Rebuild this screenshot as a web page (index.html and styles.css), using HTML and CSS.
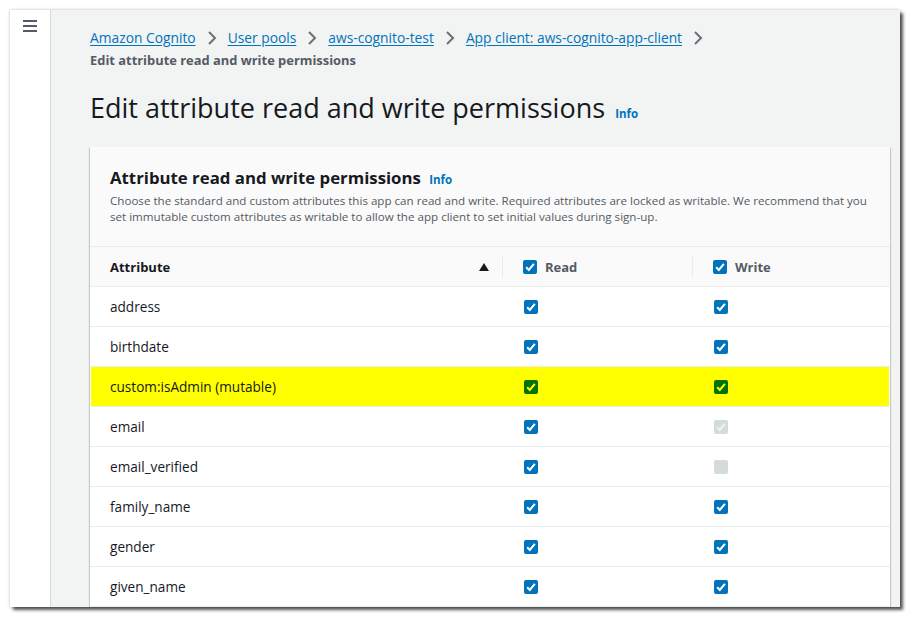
FILE: index.html
```html
<!DOCTYPE html>
<html lang="en">
<head>
<meta charset="utf-8">
<title>Edit attribute read and write permissions</title>
<link rel="stylesheet" href="styles.css">
</head>
<body>
<div class="frame">
  <aside class="nav">
    <span class="burger"><i></i><i></i><i></i></span>
  </aside>
  <main class="main">
    <nav class="crumbs">
      <div class="trail">
        <a href="#">Amazon Cognito</a>
        <svg class="chev" viewBox="0 0 12 16"><path d="M3 2l6 6-6 6"/></svg>
        <a href="#">User pools</a>
        <svg class="chev" viewBox="0 0 12 16"><path d="M3 2l6 6-6 6"/></svg>
        <a href="#">aws-cognito-test</a>
        <svg class="chev" viewBox="0 0 12 16"><path d="M3 2l6 6-6 6"/></svg>
        <a href="#">App client: aws-cognito-app-client</a>
        <svg class="chev" viewBox="0 0 12 16"><path d="M3 2l6 6-6 6"/></svg>
      </div>
      <div class="current">Edit attribute read and write permissions</div>
    </nav>
    <h1 class="title">Edit attribute read and write permissions <a class="info info-lg" href="#">Info</a></h1>
    <section class="card">
      <header class="card-head">
        <h2 class="card-title">Attribute read and write permissions <a class="info" href="#">Info</a></h2>
        <p class="card-desc">Choose the standard and custom attributes this app can read and write. Required attributes are locked as writable. We recommend that you set immutable custom attributes as writable to allow the app client to set initial values during sign-up.</p>
      </header>
      <div class="table">
        <div class="row row-head">
          <div class="cell cell-attr">
            <span class="th-label">Attribute</span>
            <svg class="sort" viewBox="0 0 10 8"><path d="M5 0L10 8H0z"/></svg>
            <span class="sep"></span>
          </div>
          <div class="cell cell-chk">
            <svg class="cb" viewBox="0 0 14 14"><rect width="14" height="14" rx="2"/><path d="M3.2 7.3l2.6 2.6L10.9 3.8"/></svg>
            <span class="th-col">Read</span>
            <span class="sep"></span>
          </div>
          <div class="cell cell-chk">
            <svg class="cb" viewBox="0 0 14 14"><rect width="14" height="14" rx="2"/><path d="M3.2 7.3l2.6 2.6L10.9 3.8"/></svg>
            <span class="th-col">Write</span>
          </div>
        </div>

        <div class="row">
          <div class="cell cell-attr">address</div>
          <div class="cell cell-chk"><svg class="cb" viewBox="0 0 14 14"><rect width="14" height="14" rx="2"/><path d="M3.2 7.3l2.6 2.6L10.9 3.8"/></svg></div>
          <div class="cell cell-chk"><svg class="cb" viewBox="0 0 14 14"><rect width="14" height="14" rx="2"/><path d="M3.2 7.3l2.6 2.6L10.9 3.8"/></svg></div>
        </div>
        <div class="row">
          <div class="cell cell-attr">birthdate</div>
          <div class="cell cell-chk"><svg class="cb" viewBox="0 0 14 14"><rect width="14" height="14" rx="2"/><path d="M3.2 7.3l2.6 2.6L10.9 3.8"/></svg></div>
          <div class="cell cell-chk"><svg class="cb" viewBox="0 0 14 14"><rect width="14" height="14" rx="2"/><path d="M3.2 7.3l2.6 2.6L10.9 3.8"/></svg></div>
        </div>
        <div class="row row-hl">
          <div class="cell cell-attr">custom:isAdmin (mutable)</div>
          <div class="cell cell-chk"><svg class="cb cb-hl" viewBox="0 0 14 14"><rect width="14" height="14" rx="2"/><path d="M3.2 7.3l2.6 2.6L10.9 3.8"/></svg></div>
          <div class="cell cell-chk"><svg class="cb cb-hl" viewBox="0 0 14 14"><rect width="14" height="14" rx="2"/><path d="M3.2 7.3l2.6 2.6L10.9 3.8"/></svg></div>
        </div>
        <div class="row">
          <div class="cell cell-attr">email</div>
          <div class="cell cell-chk"><svg class="cb" viewBox="0 0 14 14"><rect width="14" height="14" rx="2"/><path d="M3.2 7.3l2.6 2.6L10.9 3.8"/></svg></div>
          <div class="cell cell-chk"><svg class="cb cb-off" viewBox="0 0 14 14"><rect width="14" height="14" rx="2"/><path d="M3.2 7.3l2.6 2.6L10.9 3.8"/></svg></div>
        </div>
        <div class="row">
          <div class="cell cell-attr">email_verified</div>
          <div class="cell cell-chk"><svg class="cb" viewBox="0 0 14 14"><rect width="14" height="14" rx="2"/><path d="M3.2 7.3l2.6 2.6L10.9 3.8"/></svg></div>
          <div class="cell cell-chk"><svg class="cb cb-off" viewBox="0 0 14 14"><rect width="14" height="14" rx="2"/></svg></div>
        </div>
        <div class="row">
          <div class="cell cell-attr">family_name</div>
          <div class="cell cell-chk"><svg class="cb" viewBox="0 0 14 14"><rect width="14" height="14" rx="2"/><path d="M3.2 7.3l2.6 2.6L10.9 3.8"/></svg></div>
          <div class="cell cell-chk"><svg class="cb" viewBox="0 0 14 14"><rect width="14" height="14" rx="2"/><path d="M3.2 7.3l2.6 2.6L10.9 3.8"/></svg></div>
        </div>
        <div class="row">
          <div class="cell cell-attr">gender</div>
          <div class="cell cell-chk"><svg class="cb" viewBox="0 0 14 14"><rect width="14" height="14" rx="2"/><path d="M3.2 7.3l2.6 2.6L10.9 3.8"/></svg></div>
          <div class="cell cell-chk"><svg class="cb" viewBox="0 0 14 14"><rect width="14" height="14" rx="2"/><path d="M3.2 7.3l2.6 2.6L10.9 3.8"/></svg></div>
        </div>
        <div class="row">
          <div class="cell cell-attr">given_name</div>
          <div class="cell cell-chk"><svg class="cb" viewBox="0 0 14 14"><rect width="14" height="14" rx="2"/><path d="M3.2 7.3l2.6 2.6L10.9 3.8"/></svg></div>
          <div class="cell cell-chk"><svg class="cb" viewBox="0 0 14 14"><rect width="14" height="14" rx="2"/><path d="M3.2 7.3l2.6 2.6L10.9 3.8"/></svg></div>
        </div>
      </div>
    </section>
  </main>
</div>
</body>
</html>
```

FILE: styles.css
```css
* { box-sizing: border-box; }

body {
  margin: 0;
  background: #ffffff;
  font-family: "Open Sans", "Noto Sans", sans-serif;
  color: #16191f;
}

.frame {
  margin: 10px;
  width: 890px;
  height: 597px;
  display: flex;
  overflow: hidden;
  background: #f2f3f3;
  box-shadow: 0 0 3px rgba(0, 0, 0, 0.25), 3px 3px 3px rgba(0, 0, 0, 0.65);
}

.nav {
  width: 41px;
  flex: none;
  background: #ffffff;
  border-right: 1px solid #d5dbdb;
  padding-top: 10px;
}

.burger {
  display: flex;
  flex-direction: column;
  gap: 3px;
  width: 14px;
  margin-left: 13px;
}

.burger i {
  display: block;
  height: 2px;
  background: #545b64;
}

.main {
  flex: 1;
  min-width: 0;
  padding: 17px 10px 0 39px;
}

.crumbs {
  font-size: 13.8px;
  line-height: 22px;
}

.trail {
  display: flex;
  align-items: center;
}

.trail a {
  color: #0073bb;
  text-decoration: underline;
  text-underline-offset: 2px;
}

.chev {
  width: 12px;
  height: 16px;
  margin: 0 10px;
}

.chev path {
  fill: none;
  stroke: #687078;
  stroke-width: 2;
}

.current {
  font-weight: 700;
  font-size: 12.9px;
  color: #545b64;
}

.title {
  margin: 19px 0 21px;
  font-size: 27px;
  line-height: 36px;
  font-weight: 400;
  color: #16191f;
}

.info {
  color: #0073bb;
  font-size: 11.5px;
  line-height: 1;
  font-weight: 700;
  text-decoration: none;
}

.info-lg {
  margin-left: 3px;
}

.card {
  background: #ffffff;
  box-shadow: 0 1px 1px 0 rgba(0, 28, 36, 0.3), 1px 1px 1px 0 rgba(0, 28, 36, 0.15), -1px 1px 1px 0 rgba(0, 28, 36, 0.15);
}

.card-head {
  background: #fafafa;
  padding: 20px 20px 21px;
}

.card-title {
  margin: 0;
  font-size: 16.8px;
  line-height: 22px;
  font-weight: 700;
}

.card-title .info {
  margin-left: 4px;
}

.card-desc {
  margin: 4px 0 0;
  font-size: 11.6px;
  line-height: 16px;
  color: #545b64;
}

.table {
  border-top: 1px solid #eaeded;
}

.row {
  display: grid;
  grid-template-columns: 413px 190px 1fr;
  height: 40px;
  border-bottom: 1px solid #eaeded;
  background: #ffffff;
  font-size: 13.6px;
}

.row-head {
  background: #fafafa;
  font-weight: 700;
  font-size: 13px;
}

.row-hl {
  background: #ffff00;
  margin: 0 1px;
  grid-template-columns: 412px 190px 1fr;
}

.row-hl .cell-attr {
  padding-left: 19px;
}

.cell {
  display: flex;
  align-items: center;
}

.cell-attr {
  padding-left: 20px;
}

.cell-chk {
  padding-left: 21px;
}

.row-head .cell-chk {
  padding-left: 20px;
}

.th-label {
  flex: 1;
}

.sort {
  width: 10px;
  height: 8px;
  margin-right: 13px;
}

.sort path {
  fill: #16191f;
}

.sep {
  width: 1px;
  height: 22px;
  background: #eaeded;
}

.th-col {
  flex: 1;
  margin-left: 8px;
  color: #545b64;
}

.cb {
  width: 14px;
  height: 14px;
  flex: none;
}

.cb rect {
  fill: #0073bb;
}

.cb path {
  fill: none;
  stroke: #ffffff;
  stroke-width: 2;
}

.cb-hl rect {
  fill: #007300;
}

.cb-hl path {
  stroke: #ffff00;
}

.cb-off rect {
  fill: #d5dbdb;
}

.cb-off path {
  stroke: #f2f3f3;
}
```
